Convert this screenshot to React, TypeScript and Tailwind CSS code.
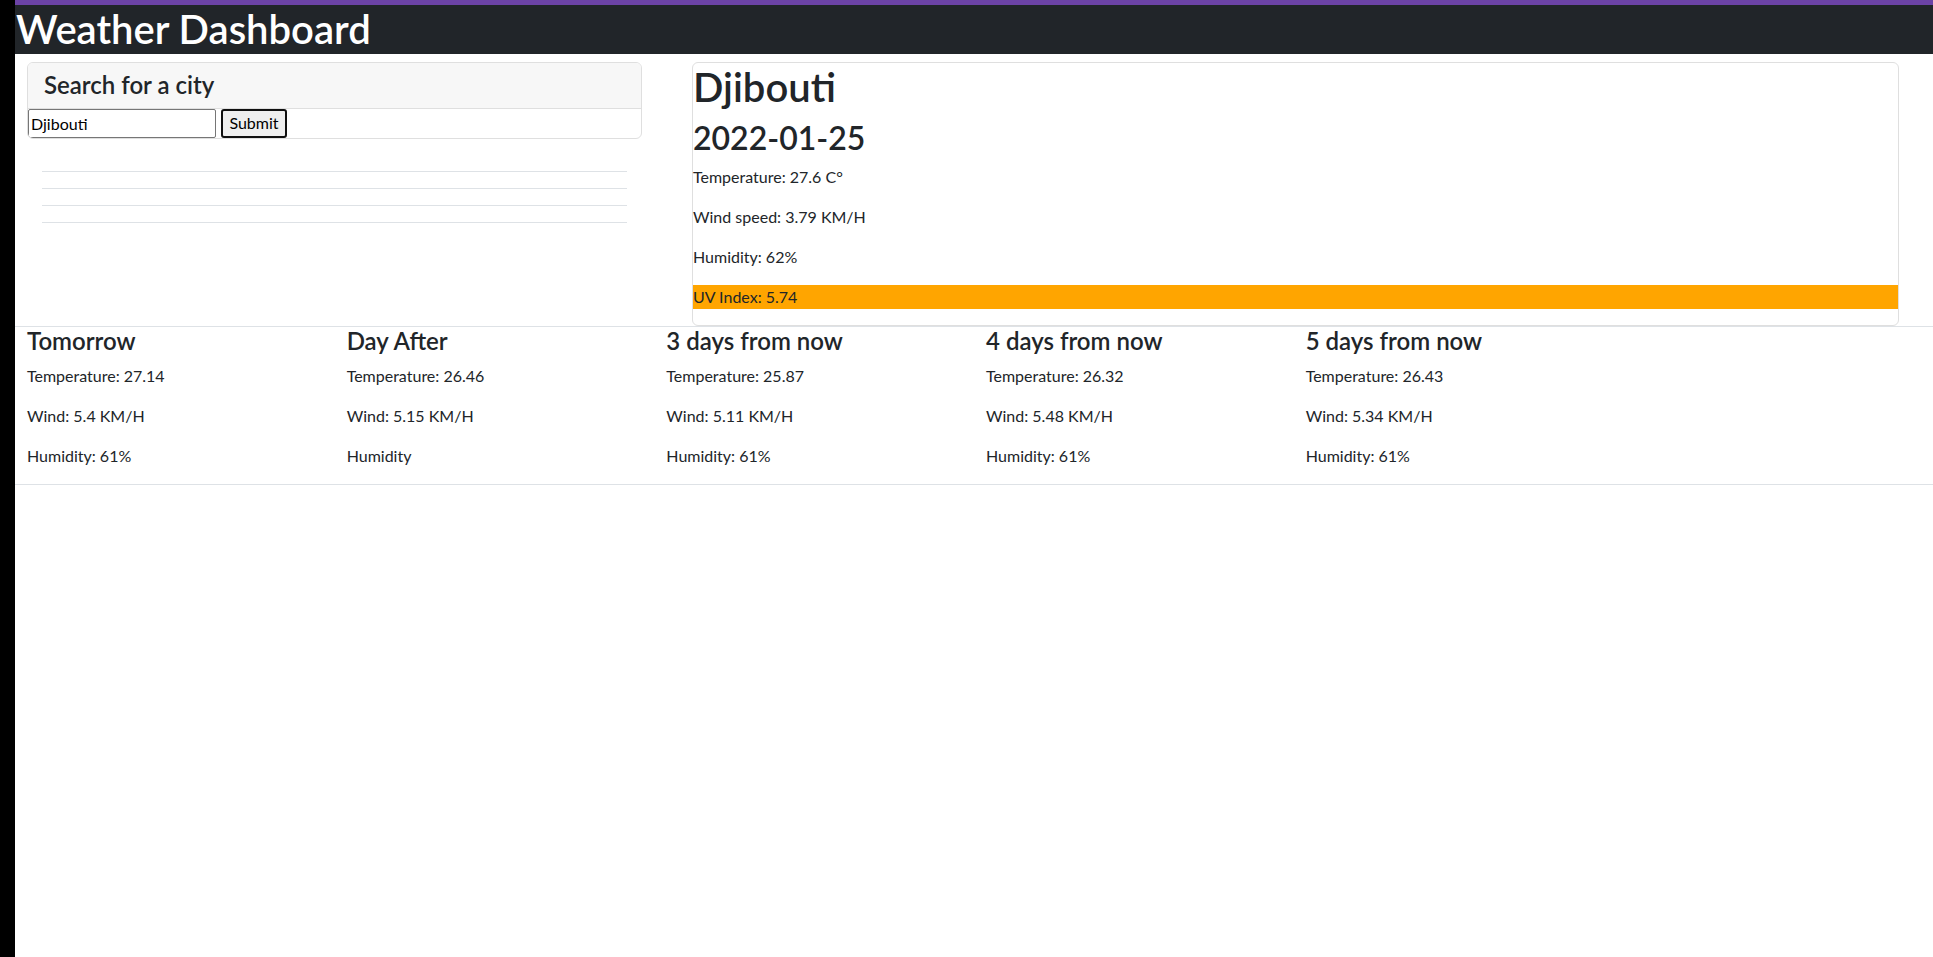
import React from "react";

const forecast = [
  { title: "Tomorrow", temp: "Temperature: 27.14", wind: "Wind: 5.4 KM/H", hum: "Humidity: 61%" },
  { title: "Day After", temp: "Temperature: 26.46", wind: "Wind: 5.15 KM/H", hum: "Humidity" },
  { title: "3 days from now", temp: "Temperature: 25.87", wind: "Wind: 5.11 KM/H", hum: "Humidity: 61%" },
  { title: "4 days from now", temp: "Temperature: 26.32", wind: "Wind: 5.48 KM/H", hum: "Humidity: 61%" },
  { title: "5 days from now", temp: "Temperature: 26.43", wind: "Wind: 5.34 KM/H", hum: "Humidity: 61%" },
];

export default function App() {
  return (
    <div
      className="flex min-h-screen bg-white text-[#212529] text-base leading-6"
      style={{ fontFamily: "Lato, 'Noto Sans', sans-serif" }}
    >
      <div className="w-[15px] shrink-0 bg-black" />
      <div className="flex-1 min-w-0">
        <div className="h-[5px] bg-[#6c43a6]" />
        <header className="h-[49px] bg-[#212529] text-white">
          <h1 className="pl-px text-[40px] leading-[1.2] font-semibold">Weather Dashboard</h1>
        </header>

        <div className="flex">
          <div className="w-[639px] shrink-0 px-3 pt-2">
            <div className="rounded-md border border-[#dfdfdf] overflow-hidden">
              <div className="bg-[#f7f7f7] border-b border-[#dfdfdf] px-4 py-2">
                <h4 className="text-2xl leading-[1.2] font-semibold">Search for a city</h4>
              </div>
              <div className="flex items-center">
                <input
                  type="text"
                  defaultValue="Djibouti"
                  className="w-[188px] h-[29px] border border-[#767676] rounded-[2px] px-[2px] text-base text-black outline-none"
                  style={{ fontFamily: "Lato, 'Noto Sans', sans-serif" }}
                />
                <button
                  type="button"
                  className="ml-[5px] h-[29px] w-[66px] border-2 border-[#101010] rounded-[3px] bg-[#efefef] text-base text-black"
                >
                  Submit
                </button>
              </div>
            </div>
            <div className="mt-[32px] mx-[15px] flex flex-col gap-[16px]">
              <div className="h-px bg-[#dee2e6]" />
              <div className="h-px bg-[#dee2e6]" />
              <div className="h-px bg-[#dee2e6]" />
              <div className="h-px bg-[#dee2e6]" />
            </div>
          </div>

          <div className="flex-1 min-w-0 pt-2 pl-[38px] pr-[34px]">
            <div className="rounded-md border border-[#dfdfdf]">
              <h1 className="text-[40px] leading-[1.2] font-semibold mb-2">Djibouti</h1>
              <h2 className="text-[32px] leading-[1.2] font-semibold mb-2">2022-01-25</h2>
              <p className="mb-4">Temperature: 27.6 C°</p>
              <p className="mb-4">Wind speed: 3.79 KM/H</p>
              <p className="mb-4">Humidity: 62%</p>
              <p className="mb-4 bg-[#ffa500]">UV Index: 5.74</p>
            </div>
          </div>
        </div>

        <div className="grid grid-cols-6 border-y border-[#dee2e6]">
          {forecast.map((f) => (
            <div key={f.title} className="px-3">
              <h4 className="text-2xl leading-[1.2] font-semibold mb-2">{f.title}</h4>
              <p className="mb-4">{f.temp}</p>
              <p className="mb-4">{f.wind}</p>
              <p className="mb-4">{f.hum}</p>
            </div>
          ))}
        </div>
      </div>
    </div>
  );
}
